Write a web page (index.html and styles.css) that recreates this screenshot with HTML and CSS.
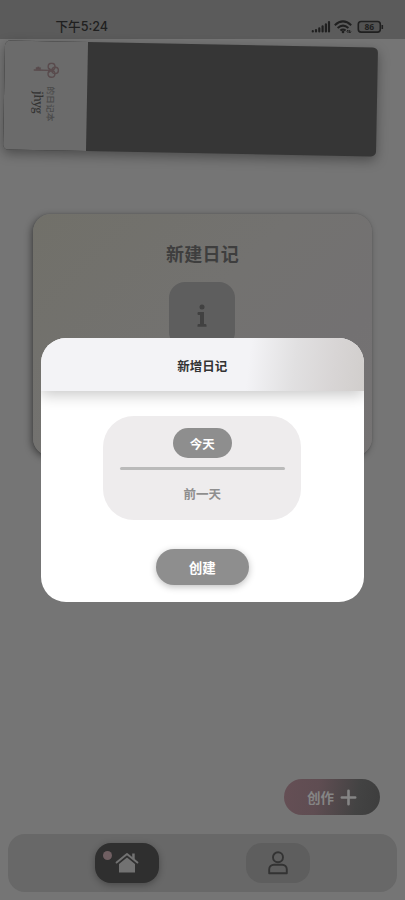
FILE: index.html
```html
<!DOCTYPE html>
<html lang="zh-CN">
<head>
<meta charset="utf-8">
<meta name="viewport" content="width=device-width, initial-scale=1">
<title>日记</title>
<link rel="stylesheet" href="styles.css">
</head>
<body>
<div class="screen">
  <header class="status">
    <span class="time">下午5:24</span>
    <svg class="status-icons" width="73" height="14" viewBox="0 0 73 14">
      <g stroke="#202020" stroke-width="2.200" stroke-linecap="round">
        <path d="M1.800 11v.5M5 10v1.500M8.300 8.300v3.200M11.600 6.300v5.200M14.900 4.300v7.200M18 2v9.500"/>
      </g>
      <g fill="none" stroke="#202020" stroke-width="2">
        <path d="M23.800 5.200Q32-2.400 40.200 5.200M26.600 8Q32 3.200 37.400 8M29.400 10.600Q32 8.400 34.600 10.600"/>
      </g>
      <circle cx="32" cy="11.900" r="1.300" fill="#202020"/>
      <path d="M37 13v-3l-1.300 1.500M38.700 10v3l1.300-1.500" fill="none" stroke="#202020"/>
      <rect x="47.300" y="1.500" width="22" height="10.600" rx="2.800" fill="#535353" stroke="#202020" stroke-width="1.600"/>
      <path d="M71.300 5v4" stroke="#202020" stroke-width="1.600"/>
      <text x="58.300" y="10" class="battery">86</text>
    </svg>
  </header>

  <section class="banner">
    <div class="cover">
      <svg class="key" width="26" height="16" viewBox="0 0 26 16" fill="none" stroke="#594b4d" stroke-width="1.400">
        <path d="M0 8h17"/><path d="M2.500 7.500V5.500h1.500v-.7h1.500v.7h1.500v2z" fill="#594b4d" stroke-width=".5"/>
        <circle cx="18" cy="4.300" r="3.400"/><circle cx="18" cy="11.500" r="3.400"/><circle cx="21.700" cy="8" r="3.200"/>
        <path d="M15.500 6l4 4M15.500 10l4-4"/>
      </svg>
      <div class="cover-title"><span class="sub">的日记本</span><span class="name">jhyg</span></div>
    </div>
  </section>

  <section class="card">
    <h2>新建日记</h2>
    <div class="info">
      <svg width="10" height="24" viewBox="0 0 10 24" fill="#414141"><circle cx="5" cy="3" r="2.500"/><path d="M1.200 8h5.800v12h1.300a1.200 1.200 0 0 1 1.200 1.200v1.600H.5v-1.600A1.200 1.200 0 0 1 1.700 20H3V11H1.500A1 1 0 0 1 .5 10V8.700z"/></svg>
    </div>
  </section>

  <button class="compose"><span>创作</span>
    <svg width="17" height="17" viewBox="0 0 17 17" stroke="#858585" stroke-width="2.600" stroke-linecap="round"><path d="M1.800 8.500h13.400M8.500 1.800v13.400"/></svg>
  </button>

  <nav class="tabs">
    <div class="tab active">
      <i class="dot"></i>
      <svg width="24" height="22" viewBox="0 0 24 22"><path d="M1.600 10.500L12 2l10.400 8.500" fill="none" stroke="#727272" stroke-width="2" stroke-linejoin="round" stroke-linecap="round"/><path d="M17.200 1.500h2.500v6.500l-2.500-2zM12 5.600l8 6.300v8.600H4v-8.600z" fill="#727272"/></svg>
    </div>
    <div class="tab">
      <svg width="20" height="24" viewBox="0 0 20 24" fill="none" stroke="#333" stroke-width="1.900" stroke-linejoin="round"><circle cx="10" cy="6.300" r="5"/><path d="M1.200 22.200v-3.900a4.700 4.700 0 0 1 4.700-4.600h8.200a4.700 4.700 0 0 1 4.700 4.600v3.900z"/></svg>
    </div>
  </nav>

  <div class="modal" role="dialog">
    <div class="modal-head">新增日记</div>
    <div class="modal-body">
      <div class="days">
        <span class="day selected">今天</span>
        <hr>
        <span class="day">前一天</span>
      </div>
      <button class="create">创建</button>
    </div>
  </div>
</div>
</body>
</html>
```
FILE: styles.css
```css
* { box-sizing: border-box; }
body {
  margin: 0;
  font-family: "Noto Sans CJK SC", sans-serif;
}
button { border: 0; padding: 0; font-family: inherit; }
.screen {
  position: relative;
  display: flex;
  flex-direction: column;
  width: 405px;
  height: 900px;
  overflow: hidden;
  background: #757575;
}
.status {
  display: flex;
  align-items: center;
  justify-content: space-between;
  flex: none;
  height: 39px;
  padding: 14px 21px 0 55.500px;
  background: #5b5b5b;
  color: #202020;
}
.time { font-family: Inter, "Noto Sans CJK SC", sans-serif; font-size: 12.600px; font-weight: 500; line-height: 14px; }
.battery { font: bold 8.500px "Noto Sans", sans-serif; fill: #202020; text-anchor: middle; }
.banner {
  flex: none;
  width: 373px;
  height: 109px;
  margin: 4.500px 0 0 4px;
  border-radius: 5px;
  overflow: hidden;
  background: #363636;
  box-shadow: 0 4px 12px rgba(0, 0, 0, .35);
  transform: rotate(1.080deg);
}
.cover {
  display: flex;
  flex-direction: column;
  align-items: center;
  width: 82.500px;
  height: 100%;
  padding-top: 21px;
  background: #6b6b6b;
}
.key { margin-left: 1px; }
.cover-title {
  display: flex;
  flex-direction: row-reverse;
  gap: 1px;
  margin: 8px 2px 0 0;
  line-height: 11px;
}
.cover-title span { writing-mode: vertical-rl; text-orientation: sideways; }
.sub { font-size: 8.800px; font-weight: 500; color: #4a4a4a; }
.name { margin-top: 5px; font: 500 12px/12px "Noto Serif", "DejaVu Serif", serif; letter-spacing: -.6px; color: #333; }
.card {
  display: flex;
  flex-direction: column;
  align-items: center;
  flex: none;
  width: 339px;
  height: 242px;
  margin: 61.500px 0 0 33px;
  padding-top: 24.500px;
  border-radius: 18px;
  background: linear-gradient(135deg, #717069, #737270 45%, #737172 75%, #757373);
  box-shadow: -2px 2px 7px rgba(0, 0, 0, .4), 0 0 2px rgba(0, 0, 0, .15);
}
.card h2 { margin: 0; font-size: 18px; font-weight: 700; line-height: 28px; color: #3e3e3e; letter-spacing: .2px; }
.info {
  display: flex;
  justify-content: center;
  width: 66px;
  height: 66px;
  margin: 15px 1px 0 0;
  padding-top: 22px;
  border-radius: 16px;
  background: #5e5e5e;
}
.compose {
  display: flex;
  align-items: center;
  gap: 6px;
  flex: none;
  width: 96px;
  height: 36px;
  margin: auto 25px 19px auto;
  padding-left: 23px;
  border-radius: 18px;
  background: linear-gradient(100deg, #654f55, #5f4d52 35%, #434343 75%, #3d3d3d);
  color: #858585;
  font-size: 13.500px;
  font-weight: 700;
}
.tabs {
  display: flex;
  align-items: center;
  justify-content: center;
  gap: 87px;
  flex: none;
  height: 58px;
  margin: 0 8px 8px;
  border-radius: 17px;
  background: #686868;
}
.tab {
  position: relative;
  display: flex;
  align-items: center;
  justify-content: center;
  width: 64px;
  height: 40px;
  border-radius: 16px;
  background: #5e5e5e;
}
.tab.active { background: #2f2f2f; box-shadow: 0 2px 7px rgba(0, 0, 0, .3); }
.dot { position: absolute; left: 8px; top: 8px; width: 9px; height: 9px; border-radius: 50%; background: #705f62; }
.modal {
  position: absolute;
  left: 41px;
  top: 337.500px;
  width: 322.500px;
  height: 264px;
  border-radius: 25px;
  overflow: hidden;
  background: #fff;
}
.modal-head {
  position: relative;
  height: 53.500px;
  background: linear-gradient(97deg, #f3f3f6 64%, #e1e0e1 78%, #d8d5d5 90%, #d1cecc);
  box-shadow: 0 4px 14px rgba(0, 0, 0, .22);
  color: #333;
  font-size: 12.500px;
  font-weight: 700;
  line-height: 56px;
  text-align: center;
}
.modal-body { display: flex; flex-direction: column; align-items: center; padding-top: 25px; }
.days {
  display: flex;
  flex-direction: column;
  align-items: center;
  width: 198px;
  height: 104px;
  padding-top: 12px;
  border-radius: 31px;
  background: #eeeced;
}
.day { width: 59px; height: 30px; border-radius: 15px; color: #8e8e8e; font-size: 12.500px; font-weight: 700; line-height: 31px; text-align: center; }
.day.selected { background: #8e8e8e; color: #fff; line-height: 32px; }
.days hr { width: 165px; height: 3px; margin: 8.500px 0 8px; border: 0; border-radius: 2px; background: #bababa; }
.create {
  width: 93px;
  height: 36px;
  margin-top: 29px;
  border-radius: 18px;
  background: #8e8e8e;
  box-shadow: 0 2px 7px rgba(0, 0, 0, .25);
  color: #fff;
  font-size: 13.500px;
  font-weight: 700;
}
```
